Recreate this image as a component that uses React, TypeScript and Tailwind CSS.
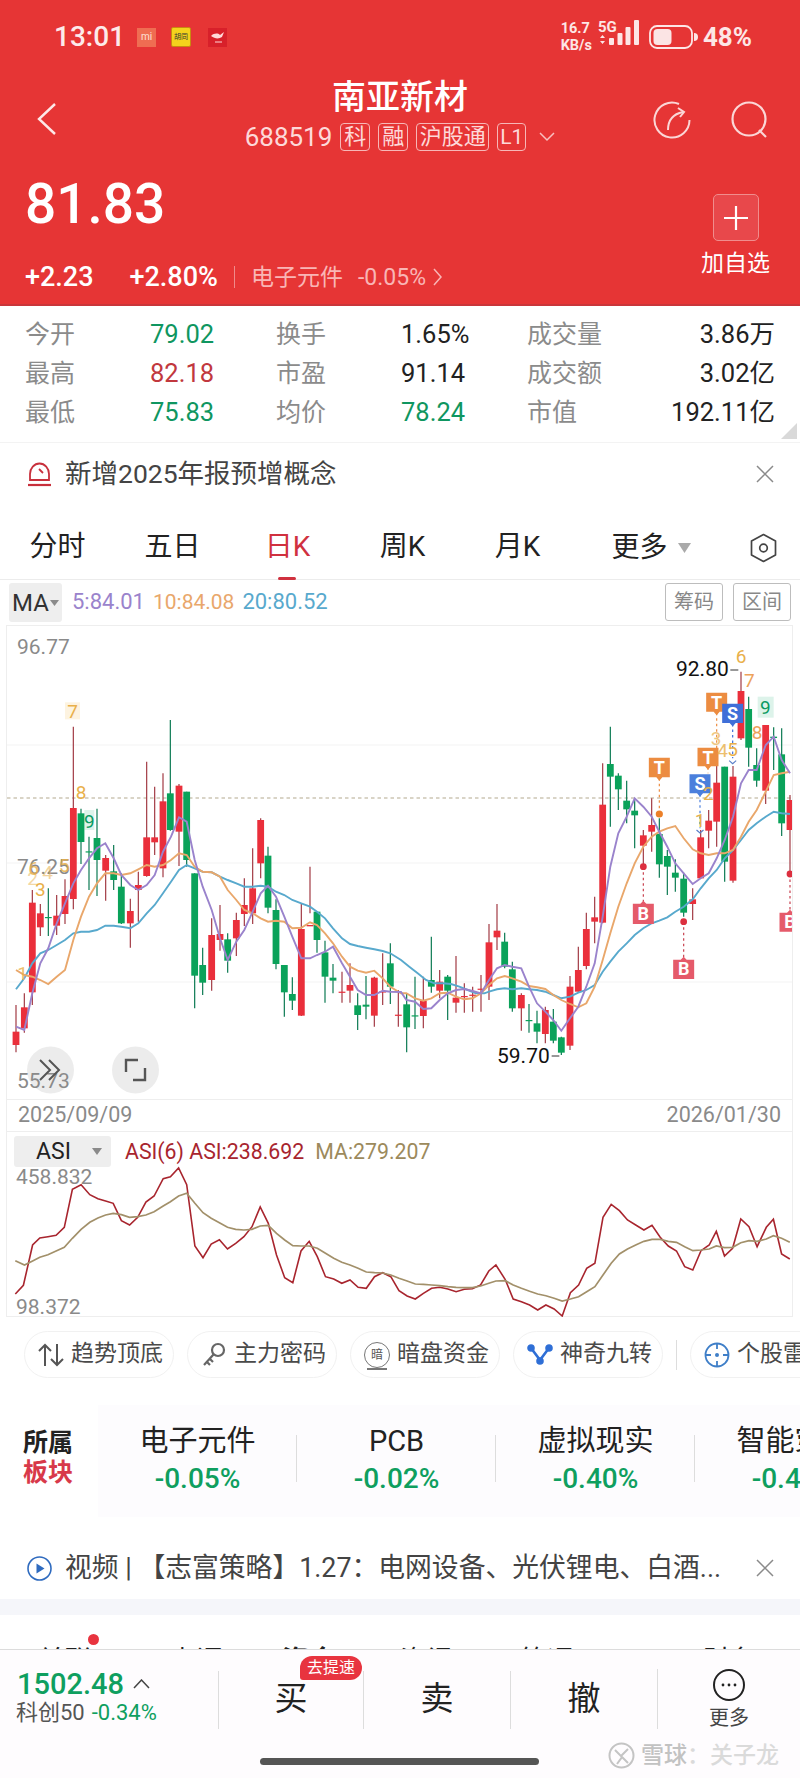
import React from "react";

type C = [number, number, number, number, number, "r" | "g"];

const candlesA: C[] = [
  [45, 1185, 1265, 1305, 1327, "r"], [70, 1150, 1192, 1255, 1268, "r"], [94, 840, 878, 1147, 1185, "r"], [118, 882, 910, 952, 978, "r"],
  [142, 835, 921, 924, 978, "g"], [167, 855, 917, 947, 975, "r"], [192, 808, 858, 912, 942, "r"], [217, 350, 594, 867, 898, "r"],
  [240, 596, 610, 696, 762, "g"], [264, 680, 724, 727, 840, "g"], [288, 596, 684, 750, 858, "g"], [314, 735, 744, 782, 872, "r"],
  [338, 705, 784, 810, 840, "g"], [361, 790, 830, 940, 942, "g"], [388, 866, 903, 940, 1013, "r"], [412, 785, 825, 840, 935, "r"],
  [437, 455, 682, 798, 800, "r"], [461, 530, 682, 697, 735, "r"], [486, 490, 574, 775, 802, "r"], [508, 330, 550, 660, 662, "g"],
  [534, 522, 527, 665, 768, "r"], [557, 545, 545, 750, 770, "g"], [581, 790, 790, 1097, 1195, "g"], [605, 1013, 1065, 1118, 1155, "g"],
  [632, 925, 975, 1110, 1142, "r"], [657, 885, 972, 990, 1022, "r"], [680, 970, 988, 1052, 1088, "g"], [706, 908, 930, 985, 1038, "r"],
  [730, 805, 885, 912, 948, "r"], [755, 715, 835, 910, 942, "r"], [779, 625, 630, 760, 805, "r"], [801, 710, 737, 893, 910, "g"],
  [825, 868, 900, 1062, 1078, "g"], [850, 1065, 1065, 1147, 1220, "g"], [874, 1102, 1152, 1172, 1200, "g"], [901, 882, 957, 1217, 1218, "r"],
  [927, 770, 945, 949, 910, "r"], [948, 905, 905, 990, 1028, "g"], [972, 992, 1027, 1100, 1178, "g"], [996, 1062, 1103, 1112, 1150, "g"],
  [1023, 1085, 1145, 1148, 1178, "r"], [1047, 1060, 1125, 1142, 1178, "r"], [1070, 1150, 1186, 1215, 1260, "g"], [1095, 1098, 1184, 1190, 1228, "g"],
  [1120, 1100, 1103, 1217, 1250, "r"], [1145, 1030, 1144, 1147, 1185, "r"], [1168, 1000, 1060, 1130, 1182, "g"], [1192, 1140, 1214, 1217, 1250, "r"],
];

const candlesB: C[] = [
  [17, 1150, 1183, 1252, 1327, "g"], [42, 1100, 1216, 1219, 1257, "g"], [67, 1100, 1172, 1218, 1255, "r"], [91, 980, 1110, 1130, 1148, "g"],
  [116, 1080, 1115, 1142, 1165, "r"], [140, 1095, 1100, 1142, 1230, "g"], [165, 1038, 1163, 1178, 1208, "r"], [190, 1120, 1158, 1161, 1208, "r"],
  [215, 1130, 1154, 1157, 1205, "r"], [240, 1095, 1136, 1139, 1205, "r"], [264, 942, 997, 1130, 1170, "r"], [288, 882, 962, 982, 1020, "r"],
  [311, 968, 995, 1070, 1075, "g"], [334, 1055, 1078, 1195, 1205, "g"], [361, 1150, 1155, 1195, 1262, "r"], [384, 1182, 1230, 1233, 1268, "g"],
  [408, 1202, 1240, 1265, 1300, "g"], [433, 1190, 1200, 1272, 1300, "r"], [457, 1197, 1235, 1292, 1300, "g"], [481, 1280, 1282, 1328, 1335, "g"],
  [507, 1098, 1130, 1307, 1320, "r"], [532, 1010, 1080, 1145, 1145, "r"], [556, 908, 957, 1068, 1078, "r"], [581, 860, 922, 935, 1000, "r"],
  [605, 460, 584, 938, 940, "r"], [628, 350, 462, 500, 650, "g"], [652, 490, 497, 538, 600, "g"], [677, 512, 572, 598, 640, "g"],
  [701, 565, 602, 616, 715, "g"], [727, 660, 676, 707, 770, "r"], [752, 565, 645, 665, 725, "r"], [775, 625, 672, 763, 803, "g"],
  [799, 720, 738, 770, 855, "g"], [823, 748, 788, 803, 845, "g"], [848, 788, 806, 908, 920, "g"], [875, 835, 868, 882, 930, "r"],
  [899, 660, 682, 805, 805, "r"], [923, 600, 632, 662, 715, "r"], [947, 435, 518, 635, 710, "r"], [971, 470, 470, 755, 815, "g"],
  [996, 468, 500, 812, 818, "r"], [1020, 185, 243, 385, 390, "r"], [1043, 260, 297, 413, 470, "g"], [1067, 415, 465, 512, 530, "g"],
  [1094, 345, 345, 542, 582, "r"], [1118, 352, 380, 384, 480, "g"], [1142, 355, 433, 640, 678, "g"], [1167, 555, 570, 660, 790, "r"],
];

const p5A = "45,1250 70,1260 94,1150 118,1060 142,1015 167,940 192,880 217,820 240,780 264,745 288,715 313,700 338,745 361,795 388,825 412,840 437,825 461,795 486,725 510,680 534,622 557,635 581,750 605,830 632,900 657,985 680,1050 706,995 730,960 755,905 779,850 801,827 825,860 850,920 874,980 901,1045 927,1045 948,1035 972,1025 996,1010 1023,1060 1047,1100 1070,1140 1095,1155 1120,1155 1145,1142 1168,1145 1200,1146";
const p5B = "16,1170 42,1175 67,1197 91,1195 116,1170 140,1150 165,1140 190,1137 215,1143 240,1150 264,1110 288,1075 311,1065 334,1070 361,1075 384,1130 408,1180 433,1205 457,1230 481,1262 507,1225 532,1190 556,1130 581,1060 605,920 628,770 652,670 677,620 701,565 727,590 752,620 775,665 799,710 823,760 848,790 875,822 899,805 923,790 947,745 971,690 996,620 1020,520 1043,480 1067,480 1094,405 1118,380 1142,450 1167,490";
const p10A = "45,1080 70,1095 94,1100 118,1110 142,1122 167,1100 192,1080 217,990 240,920 264,860 288,820 313,790 338,790 361,795 388,790 412,778 437,765 461,770 486,765 510,750 534,730 557,735 581,770 605,785 632,787 657,800 680,840 706,870 730,900 755,910 779,925 801,935 825,932 850,935 874,955 901,953 927,937 948,945 972,970 996,1000 1023,1040 1047,1070 1070,1082 1095,1088 1120,1082 1145,1105 1168,1130 1200,1150";
const p10B = "16,1150 42,1165 67,1172 91,1165 116,1150 140,1148 165,1160 190,1168 215,1165 240,1150 264,1125 288,1105 311,1098 334,1105 361,1115 384,1128 408,1132 433,1137 457,1155 481,1170 507,1182 532,1192 556,1180 581,1130 605,1050 628,970 652,890 677,820 701,760 727,710 752,680 775,665 799,655 823,648 848,685 875,718 899,730 923,735 947,730 971,730 996,720 1020,680 1043,635 1067,600 1094,545 1118,495 1142,490 1167,485";
const p20A = "45,1138 70,1105 94,1060 118,1030 142,1020 167,1005 192,990 217,970 240,965 264,965 288,960 313,947 338,947 361,950 388,955 412,940 437,910 461,885 486,850 510,815 534,780 557,765 581,775 605,785 632,787 657,800 680,810 706,820 730,830 755,830 779,827 801,830 825,845 850,855 874,870 901,880 927,890 948,905 972,925 996,955 1023,985 1047,1002 1070,1008 1095,1013 1120,1018 1145,1023 1168,1030 1200,1050";
const p20B = "25,1070 50,1090 75,1110 100,1120 125,1120 150,1122 175,1130 200,1140 225,1150 250,1150 264,1145 288,1138 311,1135 334,1138 361,1135 384,1138 408,1140 433,1145 457,1155 481,1165 507,1160 532,1148 556,1140 581,1125 605,1085 628,1055 652,1025 677,1000 701,975 727,955 752,940 775,932 799,922 823,905 848,890 875,868 899,835 923,805 947,780 971,745 996,720 1020,690 1043,660 1067,640 1094,620 1118,605 1142,610 1167,612";

const asi = "28,582 44,556 62,435 76,414 92,410 108,406 124,382 140,268 157,254 174,284 190,296 205,303 220,310 236,362 252,375 268,352 284,306 300,288 318,236 332,230 348,204 364,254 380,438 396,473 412,432 428,419 444,447 460,430 476,410 492,380 508,321 524,370 540,465 556,533 572,548 588,453 604,424 620,470 636,530 652,537 668,550 684,540 700,562 716,565 732,530 748,518 764,530 780,572 796,588 812,597 828,580 844,565 860,562 876,567 892,575 908,568 924,566 940,555 956,513 970,495 988,538 1004,597 1020,605 1036,615 1052,630 1068,615 1084,627 1100,648 1116,578 1132,555 1148,505 1164,490 1180,352 1196,313 1212,332 1228,360 1244,375 1260,390 1276,376 1292,412 1308,438 1324,453 1340,500 1356,510 1372,452 1388,435 1402,394 1418,468 1434,445 1450,357 1466,380 1482,440 1500,382 1514,358 1530,462 1546,477";
const asiMa = "28,482 46,495 62,483 76,472 92,464 108,453 124,442 140,415 157,388 174,367 190,354 205,345 220,340 236,344 252,352 268,350 284,345 300,335 318,318 332,305 348,288 364,280 380,310 396,338 412,355 428,368 444,382 460,388 476,390 492,388 508,378 524,376 540,400 556,420 572,437 588,438 604,438 620,445 636,460 652,475 668,487 684,495 700,505 716,516 732,518 748,519 764,525 780,535 796,543 812,552 828,553 844,555 860,557 876,560 892,562 908,563 924,563 940,558 956,550 970,543 988,542 1004,555 1020,565 1036,574 1052,582 1068,587 1084,595 1100,603 1116,597 1132,590 1148,575 1164,560 1180,525 1196,490 1212,462 1228,447 1244,435 1260,424 1276,418 1292,418 1308,424 1324,427 1340,440 1356,452 1372,450 1388,447 1402,438 1418,443 1434,442 1450,428 1466,422 1482,424 1500,417 1514,407 1530,415 1546,427";

const ya = (z: number) => 610 + z / 3;
const xa = (z: number) => z / 3;
const xb = (z: number) => 400 + z / 3;

const mapPts = (s: string, fx: (n: number) => number) =>
  s.split(" ").map((p) => { const [a, b] = p.split(",").map(Number); return `${fx(a).toFixed(1)},${ya(b).toFixed(1)}`; }).join(" ");
const joined = (a: string, b: string) => `${mapPts(a, xa)} ${mapPts(b, xb)}`;
const mapAsi = (s: string) =>
  s.split(" ").map((p) => { const [a, b] = p.split(",").map(Number); return `${(a / 1.96).toFixed(1)},${(1100 + b / 3).toFixed(1)}`; }).join(" ");

function Candles({ data, fx }: { data: C[]; fx: (n: number) => number }) {
  return (
    <g>
      {data.map((c, i) => {
        const x = fx(c[0]);
        const fill = c[5] === "r" ? "#ea2f3b" : "#0aa25a";
        const wick = c[5] === "r" ? "#a23a44" : "#0b7a52";
        return (
          <g key={i}>
            <line x1={x} x2={x} y1={ya(c[1])} y2={ya(c[4])} stroke={wick} strokeWidth="1.2" />
            <rect x={x - 3.4} width="6.8" y={ya(c[2])} height={Math.max(ya(c[3]) - ya(c[2]), 1.2)} fill={fill} />
          </g>
        );
      })}
    </g>
  );
}

function Flag({ x, top, bot, fill, label, tail }: { x: number; top: number; bot: number; fill: string; label: string; tail: number }) {
  const cx = xb(x), t = ya(top), b = ya(bot), e = ya(tail);
  return (
    <g>
      <line x1={cx} x2={cx} y1={b} y2={e} stroke={fill} strokeWidth="1.2" strokeDasharray="2.5 3" />
      <path d={`M${cx - 10.5} ${t + 1} h21 v${b - t - 2} h-7.5 l-3 3.5 l-3 -3.5 h-7.5 z`} fill={fill} />
      <text x={cx} y={(t + b) / 2 + 6.5} textAnchor="middle" fontSize="18" fontWeight="700" fill="#fff">{label}</text>
    </g>
  );
}

function BuyTag({ x, top, bot, dot }: { x: number; top: number; bot: number; dot: number }) {
  const cx = xb(x), t = ya(top), b = ya(bot), d = ya(dot);
  return (
    <g>
      <line x1={cx} x2={cx} y1={d} y2={t} stroke="#c8404e" strokeWidth="1.2" strokeDasharray="2.5 3" />
      <circle cx={cx} cy={d} r="3.4" fill="#dc2f3f" />
      <path d={`M${cx - 10.5} ${t + 2} h7.5 l3 -3 l3 3 h7.5 v${b - t - 2} h-21 z`} fill="#e55a6a" />
      <text x={cx} y={(t + b) / 2 + 7} textAnchor="middle" fontSize="18" fontWeight="700" fill="#fff">B</text>
    </g>
  );
}

function Num({ x, y, t, c = "#e9b04a", o = 1 }: { x: number; y: number; t: string; c?: string; o?: number }) {
  return <text x={x} y={y + 7} textAnchor="middle" fontSize="19" fill={c} opacity={o}>{t}</text>;
}

function MainChart() {
  const grid = [745, 863, 982];
  return (
    <div className="w-[787px] h-[475px] ml-[6px] border border-[#eeeeee] overflow-hidden">
      <svg width="787" height="474" viewBox="6 626 787 474" className="block">
        {grid.map((y) => <line key={y} x1="6" x2="793" y1={y} y2={y} stroke="#f3f3f3" strokeWidth="1" />)}
        <line x1="6" x2="793" y1="798" y2="798" stroke="#b3a98e" strokeWidth="1" strokeDasharray="3.5 3" />
        <rect x={xa(192)} y={ya(277)} width="15" height="17" fill="#fdf3e0" />
        <rect x={xa(250)} y={ya(600)} width="10" height="20" fill="#ddf3ea" />
        <rect x={xb(1070)} y={ya(260)} width="16" height="21" fill="#ddf3ea" />
        <Candles data={candlesA} fx={xa} />
        <Candles data={candlesB} fx={xb} />
        <polyline points={joined(p20A, p20B)} fill="none" stroke="#58a9cd" strokeWidth="1.9" />
        <polyline points={joined(p10A, p10B)} fill="none" stroke="#e9a76b" strokeWidth="1.9" />
        <polyline points={joined(p5A, p5B)} fill="none" stroke="#9a83cc" strokeWidth="1.9" />

        <circle cx="49.5" cy="1070" r="23.5" fill="#e9e9e9" opacity="0.85" />
        <circle cx="134.5" cy="1070" r="23.5" fill="#ececec" />

        <text x="16" y="654" fontSize="21" fill="#8a8a8a">96.77</text>
        <text x="16" y="874" fontSize="21" fill="#8a8a8a">76.25</text>
        <text x="16" y="1088" fontSize="21" fill="#8a8a8a">55.73</text>

        <path d="M39 1060 l10 10 l-10 10 M48 1060 l10 10 l-10 10" fill="none" stroke="#555" strokeWidth="2" />
        <path d="M125 1072 v-12 h12 M144 1068 v12 h-12" fill="none" stroke="#555" strokeWidth="2.4" />

        <Num x={xa(215)} y={ya(302)} t="7" />
        <Num x={xa(240)} y={ya(547)} t="8" />
        <Num x={xa(265)} y={ya(632)} t="9" c="#0b9a62" />
        <Num x={xa(98)} y={ya(775)} t="6" o={0.8} />
        <Num x={xa(190)} y={ya(765)} t="5" o={0.85} />
        <Num x={xa(140)} y={ya(785)} t="4" o={0.55} />
        <Num x={xa(118)} y={ya(838)} t="3" />
        <Num x={xa(95)} y={ya(805)} t="2" o={0.5} />
        <Num x={xa(65)} y={ya(1090)} t="1" o={0.8} />

        <Flag x={775} top={440} bot={505} fill="#ec8c41" label="T" tail={612} />
        <circle cx={xb(775)} cy={ya(612)} r="3.6" fill="#ec8028" />
        <Flag x={947} top={245} bot={308} fill="#ec8c41" label="T" tail={430} />
        <Flag x={921} top={410} bot={472} fill="#ec8c41" label="T" tail={490} />
        <Flag x={897} top={490} bot={553} fill="#4b7fdc" label="S" tail={655} />
        <Flag x={995} top={278} bot={342} fill="#3f6fd8" label="S" tail={445} />
        <path d={`M${xb(897) - 3.5} ${ya(660)} l3.5 3 l3.5 -3`} fill="none" stroke="#5a7fc8" strokeWidth="1.2" />
        <path d={`M${xb(995) - 3.5} ${ya(452)} l3.5 3 l3.5 -3`} fill="none" stroke="#5a7fc8" strokeWidth="1.2" />
        <BuyTag x={727} top={875} bot={942} dot={770} />
        <BuyTag x={848} top={1043} bot={1107} dot={935} />
        <BuyTag x={1167} top={902} bot={965} dot={792} />

        <Num x={xb(1020)} y={ya(137)} t="6" />
        <Num x={xb(1045)} y={ya(210)} t="7" c="#eda25a" />
        <Num x={xb(1093)} y={ya(292)} t="9" c="#0b9a62" />
        <Num x={xb(1068)} y={ya(365)} t="8" c="#eda25a" />
        <Num x={xb(897)} y={ya(630)} t="1" />
        <Num x={xb(922)} y={ya(550)} t="2" />
        <Num x={xb(945)} y={ya(385)} t="3" o={0.7} />
        <Num x={xb(965)} y={ya(420)} t="4" o={0.8} />
        <Num x={xb(995)} y={ya(418)} t="5" />

        <text x={xb(825)} y="676" fontSize="21" fill="#111">92.80</text>
        <line x1={xb(988)} x2={xb(1012)} y1="670" y2="670" stroke="#333" strokeWidth="1" />
        <text x={xb(288)} y="1063" fontSize="21" fill="#111">59.70</text>
        <line x1={xb(452)} x2={xb(475)} y1="1056" y2="1056" stroke="#333" strokeWidth="1" />
      </svg>
    </div>
  );
}

function AsiChart() {
  return (
    <svg width="787" height="185" viewBox="6 1132 787 185" className="block">
      <polyline points={mapAsi(asi)} fill="none" stroke="#a8252e" strokeWidth="1.6" />
      <polyline points={mapAsi(asiMa)} fill="none" stroke="#a2906a" strokeWidth="1.7" />
      <text x="15" y="1184" fontSize="21" fill="#8a8a8a">458.832</text>
      <text x="15" y="1314" fontSize="21" fill="#8a8a8a">98.372</text>
    </svg>
  );
}

function Chip({ icon, label }: { icon: React.ReactNode; label: string }) {
  return (
    <div className="shrink-0 w-[150px] h-[47px] rounded-full border border-[#f1f1f1] flex items-center pl-[12px] gap-[6px] text-[23px] text-[#4a4a4a]">
      <span className="w-[28px] flex justify-center">{icon}</span>
      <span className="whitespace-nowrap">{label}</span>
    </div>
  );
}

function Stat({ a, b, c, right }: { a: string; b: string; c: string; right?: boolean }) {
  return (
    <>
      <span className="text-[#8b8b8b] text-[25px]">{a}</span>
      <span className={`${c} ${right ? "justify-self-end" : ""}`}>{b}</span>
    </>
  );
}

function Sector({ name, pct, sep = true }: { name: string; pct: string; sep?: boolean }) {
  return (
    <div className="relative shrink-0 w-[199px] pt-[18px] flex flex-col items-center">
      <span className="text-[29px] leading-[36px] text-[#222] whitespace-nowrap">{name}</span>
      <span className="text-[28px] leading-[38px] mt-[1px] text-[#0f9f5f] font-medium">{pct}</span>
      {sep && <span className="absolute right-0 top-[30px] w-px h-[47px] bg-[#dddddd]" />}
    </div>
  );
}

function Close() {
  return (
    <svg width="18" height="18" viewBox="0 0 18 18" className="shrink-0"><path d="M1 1 L17 17 M17 1 L1 17" stroke="#8a8a8a" strokeWidth="1.5" /></svg>
  );
}

export default function App() {
  return (
    <div className="relative w-[800px] h-[1778px] overflow-hidden bg-white [font-family:Roboto,'Noto_Sans_CJK_SC',sans-serif] text-[#222]">
      {/* Red header */}
      <div className="h-[306px] bg-[#e63535] text-white border-b-[2px] border-[#c9363a]">
        <div className="h-[74px] flex items-center justify-between pl-[54px] pr-[48px]">
          <div className="flex items-center">
            <span className="text-[28px] font-medium text-[#fdeaea] leading-none">13:01</span>
            <span className="ml-[12px] w-[19px] h-[19px] bg-[#ef6d52] flex items-center justify-center text-[10px] leading-none text-[#fde0d8]">mi</span>
            <span className="ml-[15px] w-[20px] h-[20px] bg-[#f4d31c] rounded-[2px] border border-[#c98a10] flex items-center justify-center text-[7px] leading-none text-[#333]">胡同</span>
            <span className="ml-[17px] w-[19px] h-[19px] bg-[#d8202a] flex items-center justify-center">
              <svg width="15" height="13" viewBox="0 0 15 13"><path d="M1 5 C4 2 8 2 10 4 L14 1 L12 6 C9 8 5 8 1 5z" fill="#ffd9d9" /><path d="M5 11 h7" stroke="#ffd9d9" strokeWidth="1" /></svg>
            </span>
          </div>
          <div className="flex items-center">
            <div className="flex flex-col text-[14.5px] font-bold leading-[17px] text-[#fde6e6] mr-[6px]">
              <span>16.7</span><span>KB/s</span>
            </div>
            <div className="flex flex-col items-start mr-[10px] w-[41px] relative h-[34px]">
              <span className="text-[15px] font-bold leading-[15px] text-[#fde6e6]">5G</span>
              <svg width="41" height="26" viewBox="0 0 41 26" className="absolute left-0 top-[0px]">
                <path d="M2 18 l2.5 -3 l2.5 3z M2 21 l2.5 3 l2.5 -3z" fill="#fde6e6" />
                <rect x="11" y="18" width="5" height="7" rx="1" fill="#fde6e6" />
                <rect x="19.5" y="13" width="5" height="12" rx="1" fill="#fde6e6" />
                <rect x="27.5" y="7" width="5" height="18" rx="1" fill="#fde6e6" />
                <rect x="36" y="0" width="5" height="25" rx="1" fill="#fde6e6" />
              </svg>
            </div>
            <svg width="49" height="24" viewBox="0 0 49 24" className="mr-[5px]">
              <rect x="1" y="1" width="42" height="22" rx="7" fill="none" stroke="#fde6e6" strokeWidth="1.8" />
              <rect x="4.5" y="4" width="18" height="16" rx="4" fill="#fbe4e4" />
              <path d="M45 8 a4 4 0 0 1 0 8z" fill="#fde6e6" />
            </svg>
            <span className="text-[26px] font-bold leading-none text-[#fde6e6]">48%</span>
          </div>
        </div>

        <div className="grid grid-cols-[1fr_auto_1fr] items-end">
          <div className="pl-[37px] pb-[16px]">
            <svg width="20" height="32" viewBox="0 0 20 32"><path d="M18 1 L2 16 L18 31" fill="none" stroke="#fde8e8" strokeWidth="2.4" /></svg>
          </div>
          <div className="flex flex-col items-center">
            <span className="text-[34px] leading-[46px] font-medium">南亚新材</span>
            <div className="mt-[3px] flex items-center gap-[8px] text-[#fdd9d9]">
              <span className="text-[26px] leading-[28px]">688519</span>
              <span className="h-[28px] w-[30px] rounded-[4px] border border-[#f7b7b7] flex items-center justify-center text-[22px] leading-none">科</span>
              <span className="h-[28px] w-[30px] rounded-[4px] border border-[#f7b7b7] flex items-center justify-center text-[22px] leading-none">融</span>
              <span className="h-[28px] w-[73px] rounded-[4px] border border-[#f7b7b7] flex items-center justify-center text-[22px] leading-none">沪股通</span>
              <span className="h-[28px] w-[29px] rounded-[4px] border border-[#f7b7b7] flex items-center justify-center text-[21px] leading-none">L1</span>
              <svg width="16" height="10" viewBox="0 0 16 10" className="ml-[5px]"><path d="M1 1 L8 8 L15 1" fill="none" stroke="#f9c0c0" strokeWidth="1.5" /></svg>
            </div>
          </div>
          <div className="flex justify-end gap-[40px] pr-[31px] pb-[12px]">
            <svg width="38" height="38" viewBox="0 0 38 38" fill="none" stroke="#fbd6d6" strokeWidth="2">
              <path d="M26 3 A17.5 17.5 0 1 0 36.5 19" />
              <path d="M15 29 C15 19 20 13 30 11" />
              <path d="M25 7 L31 11 L27 16" />
            </svg>
            <svg width="38" height="38" viewBox="0 0 38 38" fill="none" stroke="#fbd6d6" strokeWidth="2.2">
              <circle cx="18" cy="18" r="16.5" />
              <path d="M28 29 L35 36" />
            </svg>
          </div>
        </div>

        <div className="flex justify-between pl-[25px] pr-[30px]">
          <div className="flex flex-col">
            <span className="mt-[24px] text-[55px] leading-[58px] font-medium">81.83</span>
            <div className="mt-[29px] h-[30px] flex items-center text-[27px] leading-none">
              <span className="font-medium">+2.23</span>
              <span className="ml-[36px] font-medium">+2.80%</span>
              <span className="ml-[16px] w-px h-[22px] bg-[#f08a8a]" />
              <span className="ml-[16px] text-[23px] text-[#f9b5b5]">电子元件</span>
              <span className="ml-[15px] text-[23px] text-[#f9b5b5]">-0.05%</span>
              <svg width="10" height="18" viewBox="0 0 10 18" className="ml-[7px]"><path d="M1 1 L8 9 L1 17" fill="none" stroke="#f9b5b5" strokeWidth="1.5" /></svg>
            </div>
          </div>
          <div className="flex flex-col items-center w-[69px]">
            <div className="mt-[43px] w-[46px] h-[47px] rounded-[5px] bg-[#e8484b] border border-[#f08d8d] flex items-center justify-center">
              <svg width="24" height="24" viewBox="0 0 24 24"><path d="M12 0 V24 M0 12 H24" stroke="#fff" strokeWidth="2.2" /></svg>
            </div>
            <span className="mt-[9px] text-[23px] leading-[28px] whitespace-nowrap">加自选</span>
          </div>
        </div>
      </div>

      {/* Stats */}
      <div className="relative h-[137px] pt-[9px] border-b border-[#f3f3f3] px-[25px] grid grid-cols-[125px_126px_125px_126px_1fr_auto] auto-rows-[39px] items-center text-[25.5px] leading-none">
        <Stat a="今开" b="79.02" c="text-[#0f9660]" />
        <Stat a="换手" b="1.65%" c="text-[#222]" />
        <Stat a="成交量" b="3.86万" c="text-[#222]" right />
        <Stat a="最高" b="82.18" c="text-[#c1383e]" />
        <Stat a="市盈" b="91.14" c="text-[#222]" />
        <Stat a="成交额" b="3.02亿" c="text-[#222]" right />
        <Stat a="最低" b="75.83" c="text-[#0f9660]" />
        <Stat a="均价" b="78.24" c="text-[#0f9660]" />
        <Stat a="市值" b="192.11亿" c="text-[#222]" right />
        <svg width="16" height="16" viewBox="0 0 16 16" className="absolute right-[3px] bottom-[3px]"><path d="M16 0 V16 H0z" fill="#d9d9d9" /></svg>
      </div>

      {/* Notice */}
      <div className="h-[62px] flex items-center pl-[27px] pr-[26px] text-[26.5px] text-[#444]">
        <svg width="25" height="25" viewBox="0 0 25 25" fill="none" stroke="#c8303c" strokeWidth="1.8" className="shrink-0">
          <path d="M3 18 V12 A9.5 10.5 0 0 1 22 12 V18 Z" />
          <path d="M12 7 L16 11" />
          <path d="M1 23 H24" strokeWidth="2.2" />
        </svg>
        <span className="ml-[13px] flex-1">新增2025年报预增概念</span>
        <Close />
      </div>

      {/* Tabs */}
      <div className="h-[75px] pt-[11px] border-b border-[#ececec] grid grid-cols-[115px_115px_115px_115px_115px_152px_1fr] text-[28px] text-[#222] leading-[62px]">
        <span className="text-center">分时</span>
        <span className="text-center">五日</span>
        <span className="relative text-center text-[#d0313f]">
          日K
          <span className="absolute left-[48px] bottom-[-1px] w-[18px] h-[3px] rounded-full bg-[#d0313f]" />
        </span>
        <span className="text-center">周K</span>
        <span className="text-center">月K</span>
        <span className="flex items-center justify-center gap-[10px]">
          更多
          <svg width="13" height="10" viewBox="0 0 13 10"><path d="M0 0 H13 L6.5 10z" fill="#aaaaaa" /></svg>
        </span>
        <span className="flex items-center justify-center">
          <svg width="27" height="30" viewBox="0 0 27 30" fill="none" stroke="#444" strokeWidth="1.7">
            <path d="M13.5 1.5 L25.5 8 V22 L13.5 28.5 L1.5 22 V8 Z" strokeLinejoin="round" />
            <circle cx="13.5" cy="15" r="3.8" />
          </svg>
        </span>
      </div>

      {/* MA row */}
      <div className="h-[45px] flex items-start pl-[9px] pr-[9px]">
        <div className="mt-[3px] w-[53px] h-[39px] rounded-[3px] bg-[#eeeeee] flex items-center justify-center gap-[1px] text-[24px] text-[#333]">
          MA
          <svg width="9" height="6" viewBox="0 0 9 6"><path d="M0 0 H9 L4.5 6z" fill="#8a8a8a" /></svg>
        </div>
        <div className="ml-[10px] mt-[8px] flex gap-[8px] text-[22px] leading-[28px] whitespace-nowrap">
          <span className="text-[#9a83cc]">5:84.01</span>
          <span className="text-[#e9a76b] text-[21px]">10:84.08</span>
          <span className="text-[#58a9cd]">20:80.52</span>
        </div>
        <div className="ml-auto mt-[3px] flex gap-[10px]">
          <span className="w-[58px] h-[38px] rounded-[3px] border border-[#bdbdbd] flex items-center justify-center text-[20px] text-[#888]">筹码</span>
          <span className="w-[58px] h-[38px] rounded-[3px] border border-[#bdbdbd] flex items-center justify-center text-[20px] text-[#888]">区间</span>
        </div>
      </div>

      <MainChart />

      {/* Date row */}
      <div className="w-[787px] ml-[6px] h-[31px] flex items-center justify-between pl-[11px] pr-[11px] border-x border-[#eeeeee] text-[21.5px] text-[#8a8a8a]">
        <span>2025/09/09</span>
        <span>2026/01/30</span>
      </div>

      {/* ASI */}
      <div className="relative w-[787px] h-[186px] ml-[6px] border border-[#eeeeee]">
        <AsiChart />
        <div className="absolute left-[7px] top-[4px] flex items-center">
          <div className="w-[97px] h-[31px] rounded-[3px] bg-[#eeeeee] flex items-center pl-[22px] gap-[21px] text-[23px] text-[#222]">
            ASI
            <svg width="10" height="7" viewBox="0 0 10 7"><path d="M0 0 H10 L5 7z" fill="#8a8a8a" /></svg>
          </div>
          <span className="ml-[14px] text-[21.3px] text-[#a8252e] whitespace-nowrap">ASI(6) ASI:238.692</span>
          <span className="ml-[11px] text-[21.3px] text-[#9c8a5c] whitespace-nowrap">MA:279.207</span>
        </div>
      </div>

      {/* Chips */}
      <div className="mt-[14px] h-[47px] flex items-center pl-[24px] gap-[13px] overflow-hidden">
        <Chip label="趋势顶底" icon={
          <svg width="26" height="24" viewBox="0 0 26 24" fill="none" stroke="#555" strokeWidth="2"><path d="M7 23 V2 M1 8 L7 2 L13 8" /><path d="M19 1 V22 M13 16 L19 22 L25 16" /></svg>
        } />
        <Chip label="主力密码" icon={
          <svg width="24" height="26" viewBox="0 0 24 26" fill="none" stroke="#666" strokeWidth="2.2"><circle cx="16" cy="8" r="6" /><path d="M11.5 12.5 L2 23 M5 20 L8 23 M8 17 L11 20" /></svg>
        } />
        <Chip label="暗盘资金" icon={
          <span className="relative w-[26px] h-[26px] rounded-full border-[1.5px] border-[#777] flex items-center justify-center text-[12px] leading-none text-[#555]">
            暗
            <span className="absolute bottom-[-3px] left-[2px] right-[2px] h-[2px] bg-[#777]" />
          </span>
        } />
        <Chip label="神奇九转" icon={
          <svg width="26" height="22" viewBox="0 0 26 22" fill="none" stroke="#2f6fd6" strokeWidth="2.6"><path d="M4 4 L13 16 L22 4" /><circle cx="4" cy="4" r="2.5" fill="#2f6fd6" /><circle cx="22" cy="4" r="2.5" fill="#2f6fd6" /><circle cx="13" cy="17" r="2.5" fill="#2f6fd6" /></svg>
        } />
        <span className="shrink-0 w-px h-[30px] bg-[#dddddd]" />
        <Chip label="个股雷达" icon={
          <svg width="26" height="26" viewBox="0 0 26 26" fill="none" stroke="#3f7fc8" strokeWidth="1.8"><circle cx="13" cy="13" r="11.5" /><path d="M13 1 V7 M13 19 V25 M1 13 H7 M19 13 H25" /><circle cx="13" cy="13" r="2" fill="#3f7fc8" stroke="none" /></svg>
        } />
      </div>

      {/* Sectors */}
      <div className="mt-[27px] h-[112px] flex overflow-hidden">
        <div className="w-[98px] shrink-0 pl-[23px] pt-[23px] text-[25px] leading-[30px] font-bold">
          <div className="text-[#222]">所属</div>
          <div className="text-[#d8394a]">板块</div>
        </div>
        <div className="flex-1 flex bg-[#fdfcfe] overflow-hidden">
          <Sector name="电子元件" pct="-0.05%" />
          <Sector name="PCB" pct="-0.02%" />
          <Sector name="虚拟现实" pct="-0.40%" />
          <Sector name="智能穿戴" pct="-0.45%" sep={false} />
        </div>
      </div>

      {/* Video notice */}
      <div className="mt-[20px] h-[62px] flex items-center pl-[27px] pr-[26px] text-[26.8px] text-[#444]">
        <svg width="25" height="25" viewBox="0 0 25 25" className="shrink-0"><circle cx="12.5" cy="12.5" r="11.5" fill="none" stroke="#2f6bbf" strokeWidth="1.6" /><path d="M9.5 7.5 L17.5 12.5 L9.5 17.5z" fill="#2f6bbf" /></svg>
        <span className="ml-[13px] flex-1 whitespace-nowrap overflow-hidden">视频 | 【志富策略】1.27：电网设备、光伏锂电、白酒...</span>
        <Close />
      </div>

      <div className="h-[16px] bg-[#f5f6fa]" />

      {/* Cut-off tabs */}
      <div className="relative h-[34px] overflow-hidden text-[27px] leading-[34px] text-[#222]">
        <span className="absolute left-[38px] top-[29px]">关联</span>
        <span className="absolute left-[88px] top-[19px] w-[11px] h-[11px] rounded-full bg-[#e8343f]" />
        <span className="absolute left-[169px] top-[29px]">点评</span>
        <span className="absolute left-[282px] top-[29px] font-bold">资金</span>
        <span className="absolute left-[400px] top-[29px]">资讯</span>
        <span className="absolute left-[520px] top-[29px]">简况 F10</span>
        <span className="absolute left-[703px] top-[29px]">财务</span>
      </div>

      {/* Bottom bar */}
      <div className="relative h-[129px] border-t border-[#dcdcdc] bg-[#fefcfe]">
        <div className="mt-[21px] h-[54px] grid grid-cols-[218px_145px_147px_147px_1fr]">
          <div className="pl-[16px] flex flex-col">
            <div className="flex items-center -mt-[4px]">
              <span className="ml-[1px] text-[29px] leading-[34px] text-[#0f9f5f] font-medium">1502.48</span>
              <svg width="17" height="10" viewBox="0 0 17 10" className="ml-[9px]"><path d="M1 9 L8.5 1 L16 9" fill="none" stroke="#444" strokeWidth="1.5" /></svg>
            </div>
            <div className="mt-[-1px] flex items-center text-[22px] leading-[26px] whitespace-nowrap">
              <span className="text-[#555]">科创50</span>
              <span className="ml-[7px] text-[#0f9f5f]">-0.34%</span>
            </div>
          </div>
          <div className="relative border-l border-[#dddddd] flex items-center justify-center text-[33px] pb-[3px]">
            买
            <span className="absolute left-[81px] top-[-15px] w-[62px] h-[24px] bg-[#e8343f] rounded-t-[12px] rounded-br-[12px] rounded-bl-[3px] flex items-center justify-center text-[16px] leading-none text-white">去提速</span>
          </div>
          <div className="border-l border-[#dddddd] flex items-center justify-center text-[33px] pb-[3px]">卖</div>
          <div className="border-l border-[#dddddd] flex items-center justify-center text-[33px] pb-[3px]">撤</div>
          <div className="border-l border-[#dddddd] flex flex-col items-center -mt-[2px]">
            <svg width="32" height="32" viewBox="0 0 32 32" fill="none"><circle cx="16" cy="16" r="15" stroke="#222" strokeWidth="2" /><circle cx="10" cy="16" r="1.4" fill="#222" /><circle cx="16" cy="16" r="1.4" fill="#222" /><circle cx="22" cy="16" r="1.4" fill="#222" /></svg>
            <span className="mt-[6px] text-[20px] leading-[22px] text-[#444]">更多</span>
          </div>
        </div>
        <div className="mt-[33px] ml-[260px] w-[279px] h-[7px] rounded-full bg-[#555555]" />
        <div className="absolute left-[608px] top-[92px] flex items-center gap-[6px]">
          <svg width="27" height="27" viewBox="0 0 27 27" fill="none" stroke="#c4c4c4" strokeWidth="2"><circle cx="13.5" cy="13.5" r="12" /><path d="M7 8 L14 15 L9 22 M20 7 L13 14 L20 21" /></svg>
          <span className="text-[23px] leading-none font-medium whitespace-nowrap text-[#c2c2c2]">雪球<span className="text-[#dadada]">：关子龙</span></span>
        </div>
      </div>
    </div>
  );
}
